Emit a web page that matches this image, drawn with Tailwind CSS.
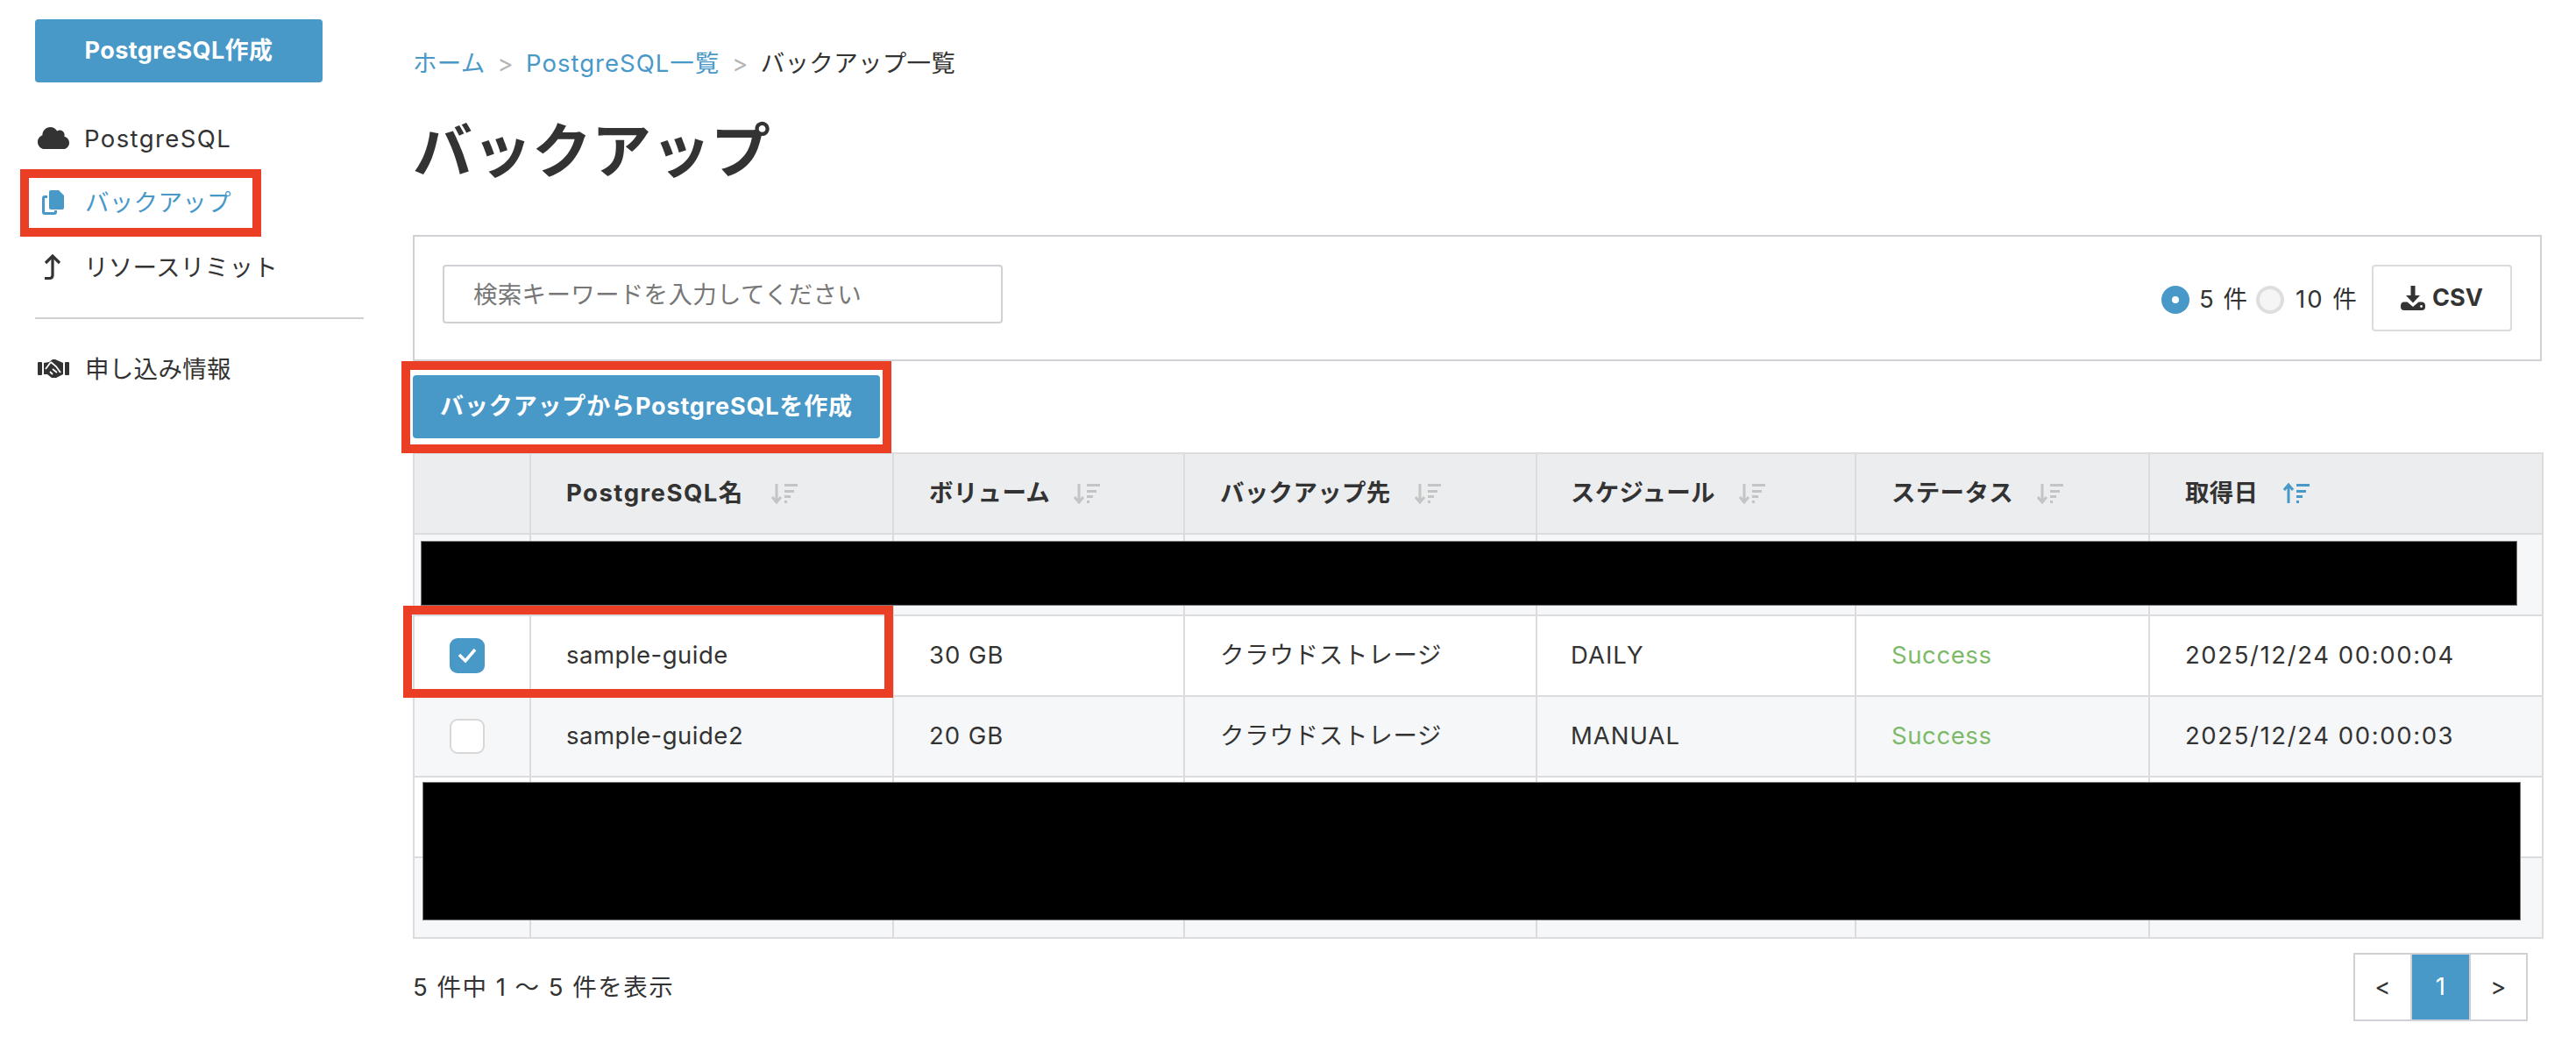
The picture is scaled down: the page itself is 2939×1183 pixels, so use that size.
<!DOCTYPE html>
<html lang="ja">
<head>
  <meta charset="UTF-8" />
  <title>バックアップ</title>
  <script src="https://cdn.jsdelivr.net/npm/@tailwindcss/browser@4"></script>
</head>
<body class="bg-white text-[#333] font-['Inter','Noto_Sans_CJK_JP',sans-serif] text-[27.5px] tracking-[0.3px]">
  <div class="relative flex w-[2939px] h-[1183px] overflow-hidden">

    <!-- サイドバー -->
    <aside class="w-[471px] shrink-0 pl-[40px] pt-[22px]">
      <button class="block w-[328px] h-[72px] rounded-[4px] bg-[#4898c8] text-white font-bold text-[27px] tracking-[0.4px]">PostgreSQL作成</button>
      <nav class="mt-[27px] w-[375px]">
        <a class="flex items-center h-[73.5px]">
          <svg class="w-[36px] h-[29px] ml-[3px] fill-[#333]" viewBox="0 0 640 512"><path d="M537.6 226.6c4.1-10.7 6.4-22.4 6.4-34.6 0-53-43-96-96-96-19.7 0-38.1 6-53.3 16.2C367 64.2 315.3 32 256 32c-88.4 0-160 71.6-160 160 0 2.7.1 5.4.2 8.1C40.2 219.8 0 273.2 0 336c0 79.5 64.5 144 144 144h368c70.7 0 128-57.3 128-128 0-61.9-44-113.6-102.4-125.4z"/></svg>
          <span class="ml-[17px] pt-[2px] tracking-[1.4px]">PostgreSQL</span>
        </a>
        <a class="flex items-center h-[73.5px] text-[#4898c8]">
          <svg class="w-[25px] h-[28px] ml-[8px] mr-[6px] text-[#4898c8]" viewBox="0 0 25 28"><path fill="none" stroke="currentColor" stroke-width="3" d="M6 7.5H3q-1.500 0-1.500 1.500v16q0 1.500 1.500 1.500h11q1.500 0 1.500-1.500v-2"/><path fill="currentColor" d="M10 0h9l6 6v14q0 2-2 2H10q-2 0-2-2V2q0-2 2-2z"/></svg>
          <span class="ml-[18px]">バックアップ</span>
        </a>
        <a class="flex items-center h-[73.5px]">
          <svg class="w-[22px] h-[30px] ml-[9px] mr-[5px]" viewBox="0 0 22 30" fill="none" stroke="#333" stroke-width="3.200"><path d="M11 3v21q0 3.500-3.500 3.500H2"/><path d="M3 10l8-8 8 8"/></svg>
          <span class="ml-[20px] pt-[2px]">リソースリミット</span>
        </a>
        <hr class="mt-[20.5px] mb-[20px] border-0 h-[2px] bg-[#d0d0d4]" />
        <a class="flex items-center h-[73.5px]">
          <svg class="w-[36px] h-[23px] ml-[3px] fill-[#333]" viewBox="0 0 36 23"><rect x="0" y="4" width="5" height="15" rx="1"/><rect x="31" y="4" width="5" height="15" rx="1"/><path d="M7 5l6-1 4-3h3l9 4v13l-8 4h-5l-5-4H7z"/><path d="M9 12l6-8M15 4l6 5 5 7M17 12l5 4M14 15l3 3" fill="none" stroke="#fff" stroke-width="1.800"/></svg>
          <span class="ml-[18px] pt-[2px]">申し込み情報</span>
        </a>
      </nav>
    </aside>

    <!-- メイン -->
    <main class="w-[2429px] shrink-0">
      <div class="flex items-center h-[40px] mt-[53px]">
        <a class="text-[#4898c8]">ホーム</a>
        <span class="mx-[14px] text-[#b5b5b5]">&gt;</span>
        <a class="text-[#4898c8] tracking-[1px]">PostgreSQL一覧</a>
        <span class="mx-[14px] text-[#b5b5b5]">&gt;</span>
        <span>バックアップ一覧</span>
      </div>
      <h1 class="mt-[31px] h-[96px] leading-[96px] text-[68px] font-bold tracking-normal">バックアップ</h1>

      <div class="mt-[48px] h-[144px] border-2 border-[#d0d0d6] pt-[32px] pl-[32px] pr-[32px] flex justify-between items-start">
        <input class="w-[639px] h-[67px] px-[33px] border-2 border-[#d0d0d6] rounded-[4px] outline-none placeholder:text-[#777]" placeholder="検索キーワードを入力してください" />
        <div class="flex items-center">
          <span class="flex items-center justify-center mt-[4px] w-[32px] h-[32px] rounded-full bg-[#4898c8]"><span class="w-[8px] h-[8px] rounded-full bg-white"></span></span>
          <span class="ml-[11px] mt-[4px] w-[65px] whitespace-pre tracking-[1.5px]">5 件</span>
          <span class="mt-[4px] w-[32px] h-[32px] rounded-full bg-[#f5f5f5] border-[4px] border-[#dedede]"></span>
          <span class="ml-[13px] mt-[4px] w-[70px] whitespace-pre tracking-[2px]">10 件</span>
          <button class="flex items-center justify-center ml-[17px] w-[160px] h-[76px] border-2 border-[#dcdcde] rounded-[4px] font-bold text-[27px] tracking-normal">
            <svg class="w-[28px] h-[28px] mr-[8px] fill-[#333]" viewBox="0 0 28 28"><path d="M11.500 0h5v11h5.500L14 19.500 6 11h5.500z"/><path d="M0 23q0-4.500 4-4.500h3.500L14 24l6.500-5.500H24q4 0 4 4.500v1q0 4-4 4H4q-4 0-4-4z"/><circle cx="23.500" cy="23.500" r="1.400" fill="#fff"/></svg>
            CSV
          </button>
        </div>
      </div>

      <button class="block mt-[16px] w-[533px] h-[72px] rounded-[4px] bg-[#4898c8] text-white font-bold text-[27px] tracking-[0.85px]">バックアップからPostgreSQLを作成</button>

      <table class="mt-[16px] w-[2429px] table-fixed border-collapse text-left">
        <colgroup>
          <col class="w-[133px]" /><col class="w-[414px]" /><col class="w-[332px]" /><col class="w-[402px]" /><col class="w-[364px]" /><col class="w-[335px]" /><col class="w-[449px]" />
        </colgroup>
        <thead class="bg-[#ecedef]">
          <tr class="h-[92px]">
            <th class="border-2 border-[#dcdcde]"></th>
            <th class="border-2 border-[#dcdcde] pl-[40px] font-bold"><span class="flex items-center tracking-[1.5px]">PostgreSQL名<svg class="ml-[31px] w-[31px] h-[24px]" viewBox="0 0 31 24" fill="none" stroke="#c4c4c4" stroke-width="3"><path d="M6 1v20M1 16l5 6 5-6"/><path d="M15 2.500h15M15 9.500h11M15 15.500h7M15 21.500h3"/></svg></span></th>
            <th class="border-2 border-[#dcdcde] pl-[40px] font-bold"><span class="flex items-center">ボリューム<svg class="ml-[27px] w-[31px] h-[24px]" viewBox="0 0 31 24" fill="none" stroke="#c4c4c4" stroke-width="3"><path d="M6 1v20M1 16l5 6 5-6"/><path d="M15 2.500h15M15 9.500h11M15 15.500h7M15 21.500h3"/></svg></span></th>
            <th class="border-2 border-[#dcdcde] pl-[40px] font-bold"><span class="flex items-center">バックアップ先<svg class="ml-[27px] w-[31px] h-[24px]" viewBox="0 0 31 24" fill="none" stroke="#c4c4c4" stroke-width="3"><path d="M6 1v20M1 16l5 6 5-6"/><path d="M15 2.500h15M15 9.500h11M15 15.500h7M15 21.500h3"/></svg></span></th>
            <th class="border-2 border-[#dcdcde] pl-[38px] font-bold"><span class="flex items-center">スケジュール<svg class="ml-[27px] w-[31px] h-[24px]" viewBox="0 0 31 24" fill="none" stroke="#c4c4c4" stroke-width="3"><path d="M6 1v20M1 16l5 6 5-6"/><path d="M15 2.500h15M15 9.500h11M15 15.500h7M15 21.500h3"/></svg></span></th>
            <th class="border-2 border-[#dcdcde] pl-[40px] font-bold"><span class="flex items-center">ステータス<svg class="ml-[27px] w-[31px] h-[24px]" viewBox="0 0 31 24" fill="none" stroke="#c4c4c4" stroke-width="3"><path d="M6 1v20M1 16l5 6 5-6"/><path d="M15 2.500h15M15 9.500h11M15 15.500h7M15 21.500h3"/></svg></span></th>
            <th class="border-2 border-[#dcdcde] pl-[40px] font-bold"><span class="flex items-center">取得日<svg class="ml-[29px] w-[31px] h-[24px]" viewBox="0 0 31 24" fill="none" stroke="#4898c8" stroke-width="3"><path d="M6 23V3M1 8l5-6 5 6"/><path d="M15 2.500h15M15 9.500h11M15 15.500h7M15 21.500h3"/></svg></span></th>
          </tr>
        </thead>
        <tbody>
          <tr class="h-[92.500px] bg-[#f6f7f9]">
            <td class="border-2 border-[#dcdcde]"></td><td class="border-2 border-[#dcdcde]"></td><td class="border-2 border-[#dcdcde]"></td><td class="border-2 border-[#dcdcde]"></td><td class="border-2 border-[#dcdcde]"></td><td class="border-2 border-[#dcdcde]"></td><td class="border-2 border-[#dcdcde]"></td>
          </tr>
          <tr class="h-[92.500px] bg-white">
            <td class="border-2 border-[#dcdcde] pl-[40px]"><span class="flex items-center justify-center w-[40px] h-[40px] rounded-[9px] bg-[#4898c8]"><svg class="w-[22px] h-[18px]" viewBox="0 0 22 18" fill="none" stroke="#fff" stroke-width="3.500"><path d="M2 8l7 7L20 2"/></svg></span></td>
            <td class="border-2 border-[#dcdcde] pl-[40px] tracking-[0.5px]">sample-guide</td>
            <td class="border-2 border-[#dcdcde] pl-[40px] tracking-[1px]">30 GB</td>
            <td class="border-2 border-[#dcdcde] pl-[40px] tracking-[0.7px]">クラウドストレージ</td>
            <td class="border-2 border-[#dcdcde] pl-[38px] tracking-[1px]">DAILY</td>
            <td class="border-2 border-[#dcdcde] pl-[40px] tracking-[0.6px] text-[#7cba6a]">Success</td>
            <td class="border-2 border-[#dcdcde] pl-[40px] tracking-[1.6px]">2025/12/24 00:00:04</td>
          </tr>
          <tr class="h-[92px] bg-[#f6f7f9]">
            <td class="border-2 border-[#dcdcde] pl-[40px]"><span class="block w-[40px] h-[40px] rounded-[9px] bg-white border-2 border-[#d8d8d8]"></span></td>
            <td class="border-2 border-[#dcdcde] pl-[40px] tracking-[0.5px]">sample-guide2</td>
            <td class="border-2 border-[#dcdcde] pl-[40px] tracking-[1px]">20 GB</td>
            <td class="border-2 border-[#dcdcde] pl-[40px] tracking-[0.7px]">クラウドストレージ</td>
            <td class="border-2 border-[#dcdcde] pl-[38px] tracking-[1px]">MANUAL</td>
            <td class="border-2 border-[#dcdcde] pl-[40px] tracking-[0.6px] text-[#7cba6a]">Success</td>
            <td class="border-2 border-[#dcdcde] pl-[40px] tracking-[1.6px]">2025/12/24 00:00:03</td>
          </tr>
          <tr class="h-[92px] bg-white">
            <td class="border-2 border-[#dcdcde]"></td><td class="border-2 border-[#dcdcde]"></td><td class="border-2 border-[#dcdcde]"></td><td class="border-2 border-[#dcdcde]"></td><td class="border-2 border-[#dcdcde]"></td><td class="border-2 border-[#dcdcde]"></td><td class="border-2 border-[#dcdcde]"></td>
          </tr>
          <tr class="h-[92px] bg-[#f6f7f9]">
            <td class="border-2 border-[#dcdcde]"></td><td class="border-2 border-[#dcdcde]"></td><td class="border-2 border-[#dcdcde]"></td><td class="border-2 border-[#dcdcde]"></td><td class="border-2 border-[#dcdcde]"></td><td class="border-2 border-[#dcdcde]"></td><td class="border-2 border-[#dcdcde]"></td>
          </tr>
        </tbody>
      </table>

      <div class="mt-[16px] flex justify-between items-start pr-[16px]">
        <span class="leading-[78px] whitespace-pre tracking-[1.5px]">5 件中 1 〜 5 件を表示</span>
        <div class="flex h-[78px] border-2 border-[#d0d0d6]">
          <a class="flex items-center justify-center w-[63px]">&lt;</a>
          <a class="flex items-center justify-center w-[69px] bg-[#4898c8] text-white border-x-2 border-[#d0d0d6]">1</a>
          <a class="flex items-center justify-center w-[63px]">&gt;</a>
        </div>
      </div>
    </main>

    <!-- 黒塗り -->
    <div class="absolute left-[480px] top-[617px] w-[2392px] h-[74px] bg-black border border-[#777]"></div>
    <div class="absolute left-[482px] top-[892px] w-[2394px] h-[158px] bg-black border border-[#777]"></div>

    <!-- 赤枠 -->
    <div class="absolute left-[23px] top-[193px] w-[275px] h-[77px] border-[10px] border-[#ea3f24]"></div>
    <div class="absolute left-[458px] top-[412px] w-[559px] h-[105px] border-[10px] border-[#ea3f24]"></div>
    <div class="absolute left-[460px] top-[691px] w-[559px] h-[105px] border-[10px] border-[#ea3f24]"></div>
  </div>
</body>
</html>
